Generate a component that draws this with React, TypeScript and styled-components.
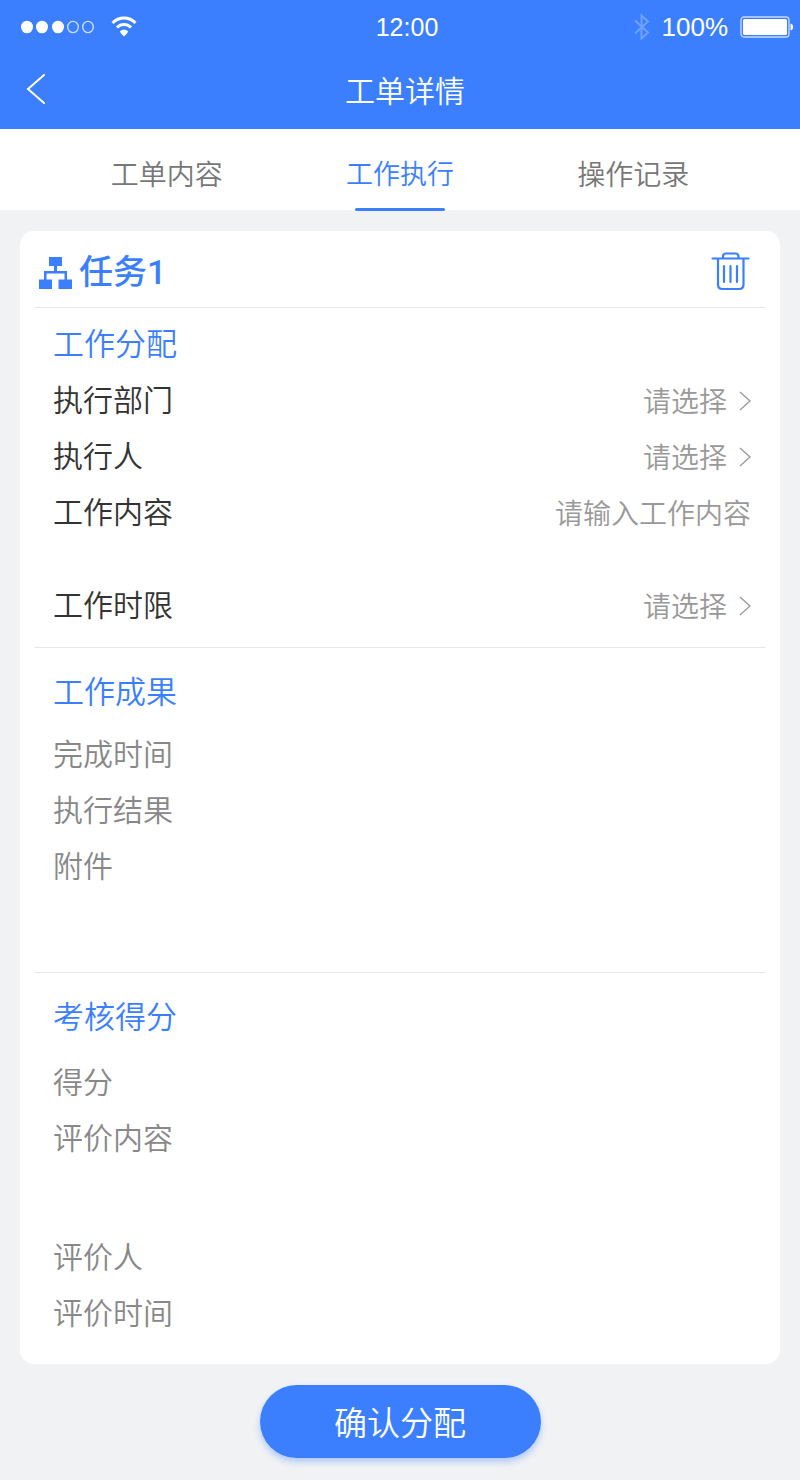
import React, { useState } from 'react';
import styled, { createGlobalStyle } from 'styled-components';

const blue = '#3b7fff';
const sans = '"Noto Sans CJK SC", sans-serif';

const GlobalStyle = createGlobalStyle`
  *, *::before, *::after { box-sizing: border-box; }
  body { margin: 0; background: #f0f2f4; font-family: ${sans}; font-weight: 350; }
  button, select, textarea { font: inherit; color: inherit; }
  button { border: 0; padding: 0; background: none; cursor: pointer; }
  svg { display: block; flex: none; }
`;

const Page = styled.div`
  min-height: 100vh;
  padding-bottom: 22px;
  background: #f0f2f4;
`;

const Header = styled.header`
  background: ${blue};
  color: #fff;
`;

const StatusBar = styled.div`
  display: grid;
  grid-template-columns: 1fr auto 1fr;
  align-items: center;
  height: 54px;
  padding: 0 6px 0 20px;
  font: 400 26px/32px "Liberation Sans", sans-serif;
`;

const Clock = styled.span`
  font-size: 25px;
`;

const StatusGroup = styled.div<{ $end?: boolean }>`
  display: flex;
  align-items: center;
  justify-content: ${p => (p.$end ? 'flex-end' : 'flex-start')};
  gap: ${p => (p.$end ? '12px' : '16px')};
`;

const TitleBar = styled.div`
  display: grid;
  grid-template-columns: 48px 1fr 38px;
  align-items: center;
  height: 75px;
  padding: 0 12px 5px;
`;

const IconButton = styled.button`
  display: flex;
  align-items: center;
  justify-content: center;
  height: 48px;
`;

const Title = styled.h1`
  margin: 0;
  font-size: 30px;
  line-height: 48px;
  font-weight: 350;
  text-align: center;
`;

const Tabs = styled.nav`
  display: grid;
  grid-template-columns: repeat(3, 1fr);
  height: 81px;
  padding: 0 50px;
  background: #fff;
`;

const Tab = styled.button<{ $active: boolean }>`
  display: flex;
  flex-direction: column;
  align-items: center;
  padding-top: 20px;
  font-size: ${p => (p.$active ? '27px' : '28px')};
  line-height: 48px;
  color: ${p => (p.$active ? blue : '#777')};
  &::after {
    content: '';
    width: 90px;
    height: 3px;
    margin-top: 11px;
    border-radius: 2px;
    background: ${p => (p.$active ? blue : 'transparent')};
  }
`;

const Card = styled.main`
  margin: 21px 20px 0;
  padding: 0 14px;
  border-radius: 14px;
  background: #fff;
`;

const CardHeader = styled.div`
  display: flex;
  align-items: center;
  gap: 7px;
  height: 76px;
  padding: 6px 16px 0 5px;
  color: ${blue};
`;

const TaskName = styled.h2`
  flex: 1;
  margin: 0;
  font-family: Roboto, ${sans};
  font-size: 34px;
  line-height: 48px;
  font-weight: 500;
`;

const Section = styled.section<{ $top: number; $gap: number }>`
  display: flex;
  flex-direction: column;
  gap: ${p => p.$gap}px;
  padding: ${p => p.$top}px 15px 13px 19px;
  border-top: 1px solid #e8e8e8;
`;

const SectionTitle = styled.h3`
  margin: 0;
  font-size: 31px;
  line-height: 48px;
  font-weight: 350;
  color: ${blue};
`;

const Fields = styled.div`
  color: #333;
`;

const Field = styled.div<{ $height?: number }>`
  display: flex;
  justify-content: space-between;
  min-height: ${p => p.$height ?? 56}px;
  font-size: 30px;
  line-height: 50px;
`;

const Picker = styled.div`
  display: flex;
  align-items: center;
  gap: 12px;
  height: 56px;
  color: #999;
`;

const Select = styled.select`
  height: 56px;
  padding: 0 0 2px;
  border: 0;
  outline: 0;
  appearance: none;
  background: transparent;
  font-size: 28px;
  text-align-last: right;
`;

const TextArea = styled.textarea`
  flex: 1;
  height: 93px;
  padding: 0;
  border: 0;
  outline: 0;
  resize: none;
  background: transparent;
  color: #333;
  font-size: 28px;
  line-height: 54px;
  text-align: right;
  &::placeholder { color: #999; opacity: 1; }
`;

const Results = styled.dl`
  margin: 0;
  color: #888;
`;

const Term = styled.dt``;
const Detail = styled.dd`
  margin: 0;
`;

const Footer = styled.footer`
  display: flex;
  justify-content: center;
  padding-top: 21px;
`;

const Confirm = styled.button`
  width: 281px;
  height: 73px;
  padding-bottom: 2px;
  border-radius: 37px;
  background: ${blue};
  box-shadow: 0 4px 6px rgba(59, 127, 255, 0.35);
  color: #fff;
  font-size: 33px;
  line-height: 48px;
`;

const SignalIcon = () => (
  <svg width="75" height="14" viewBox="0 0 75 14" fill="none" aria-hidden="true">
    {[7, 22, 38].map(x => <ellipse key={x} cx={x} cy="7" rx="6" ry="6.3" fill="#fff" />)}
    {[53, 68].map(x => <ellipse key={x} cx={x} cy="7" rx="5.3" ry="5.6" stroke="#c9dcff" strokeWidth="1.4" />)}
  </svg>
);

const WifiIcon = () => (
  <svg width="26" height="22" viewBox="0 0 26 22" fill="none" stroke="#fff" strokeWidth="3" aria-hidden="true">
    <path d="M1.5 7C8 .4 18 .4 24.5 7" />
    <path d="M6 11.500C10 7.600 16 7.600 20 11.500" />
    <path d="M9 15.300C11 13.300 15 13.300 17 15.300Q17 17 13 20.500Q9 17 9 15.300Z" fill="#fff" stroke="none" />
  </svg>
);

const BluetoothIcon = () => (
  <svg width="16" height="28" viewBox="0 0 16 28" fill="none" stroke="#6fa1ff" strokeWidth="2" aria-hidden="true">
    <path d="M1 7.500L14 19.500L7.500 25.500V2.500L14 8.500L1 20.500" />
  </svg>
);

const BatteryIcon = () => (
  <svg width="54" height="22" viewBox="0 0 54 22" fill="none" aria-hidden="true">
    <rect x="1" y="1" width="48" height="20" rx="3" stroke="#c9dcff" strokeWidth="1.3" />
    <rect x="3" y="3" width="44" height="16" rx="1.500" fill="#fff" />
    <path d="M50.500 7.500C54 8 54 14 50.500 14.500Z" fill="#fff" />
  </svg>
);

const BackIcon = () => (
  <svg width="20" height="30" viewBox="0 0 20 30" fill="none" stroke="#fff" strokeWidth="2" strokeLinecap="round" aria-hidden="true">
    <path d="M18 1L2 15L18 29" />
  </svg>
);

const TreeIcon = () => (
  <svg width="33" height="33" viewBox="0 0 33 33" fill={blue} aria-hidden="true">
    <path d="M10 1H23V10H18V15H28V23.500H33V33H19.500V23.500H25.500V17.500H7.500V23.500H13V33H0V23.500H5V15H15V10H10Z" />
  </svg>
);

const TrashIcon = () => (
  <svg width="39" height="40" viewBox="0 0 39 40" fill="none" stroke={blue} strokeWidth="2.200" strokeLinecap="round" aria-hidden="true">
    <path d="M1.500 6.500H37.500M12 6.500V4.500Q12 1.500 15 1.500H24.500Q27.500 1.500 27.500 4.500V6.500M7 6.500V32.500Q7 37 11.500 37H28Q32.500 37 32.500 32.500V6.500M13 14V30M19.500 14V30M26 14V30" />
  </svg>
);

const ChevronIcon = () => (
  <svg width="12" height="20" viewBox="0 0 12 20" fill="none" stroke="#999" strokeWidth="1.300" aria-hidden="true">
    <path d="M1 1L11 10L1 19" />
  </svg>
);

const SelectField = ({ id, label }: { id: string; label: string }) => (
  <Field>
    <label htmlFor={id}>{label}</label>
    <Picker>
      <Select id={id} defaultValue="">
        <option value="">请选择</option>
      </Select>
      <ChevronIcon />
    </Picker>
  </Field>
);

const ResultField = ({ label, height }: { label: string; height?: number }) => (
  <Field $height={height}>
    <Term>{label}</Term>
    <Detail />
  </Field>
);

const tabs = ['工单内容', '工作执行', '操作记录'];

export default function App() {
  const [active, setActive] = useState(1);
  return (
    <Page>
      <GlobalStyle />
      <Header>
        <StatusBar>
          <StatusGroup><SignalIcon /><WifiIcon /></StatusGroup>
          <Clock>12:00</Clock>
          <StatusGroup $end><BluetoothIcon /><span>100%</span><BatteryIcon /></StatusGroup>
        </StatusBar>
        <TitleBar>
          <IconButton aria-label="返回"><BackIcon /></IconButton>
          <Title>工单详情</Title>
        </TitleBar>
      </Header>
      <Tabs>
        {tabs.map((name, i) => (
          <Tab key={name} $active={i === active} onClick={() => setActive(i)}>{name}</Tab>
        ))}
      </Tabs>
      <Card>
        <CardHeader>
          <TreeIcon />
          <TaskName>任务1</TaskName>
          <IconButton aria-label="删除"><TrashIcon /></IconButton>
        </CardHeader>
        <Section $top={10} $gap={7}>
          <SectionTitle>工作分配</SectionTitle>
          <Fields>
            <SelectField id="department" label="执行部门" />
            <SelectField id="person" label="执行人" />
            <Field $height={93}>
              <label htmlFor="content">工作内容</label>
              <TextArea id="content" placeholder="请输入工作内容" />
            </Field>
            <SelectField id="deadline" label="工作时限" />
          </Fields>
        </Section>
        <Section $top={18} $gap={13}>
          <SectionTitle>工作成果</SectionTitle>
          <Results>
            <ResultField label="完成时间" />
            <ResultField label="执行结果" />
            <ResultField label="附件" height={120} />
          </Results>
        </Section>
        <Section $top={18} $gap={16}>
          <SectionTitle>考核得分</SectionTitle>
          <Results>
            <ResultField label="得分" />
            <ResultField label="评价内容" height={119} />
            <ResultField label="评价人" />
            <ResultField label="评价时间" height={65} />
          </Results>
        </Section>
      </Card>
      <Footer><Confirm>确认分配</Confirm></Footer>
    </Page>
  );
}
